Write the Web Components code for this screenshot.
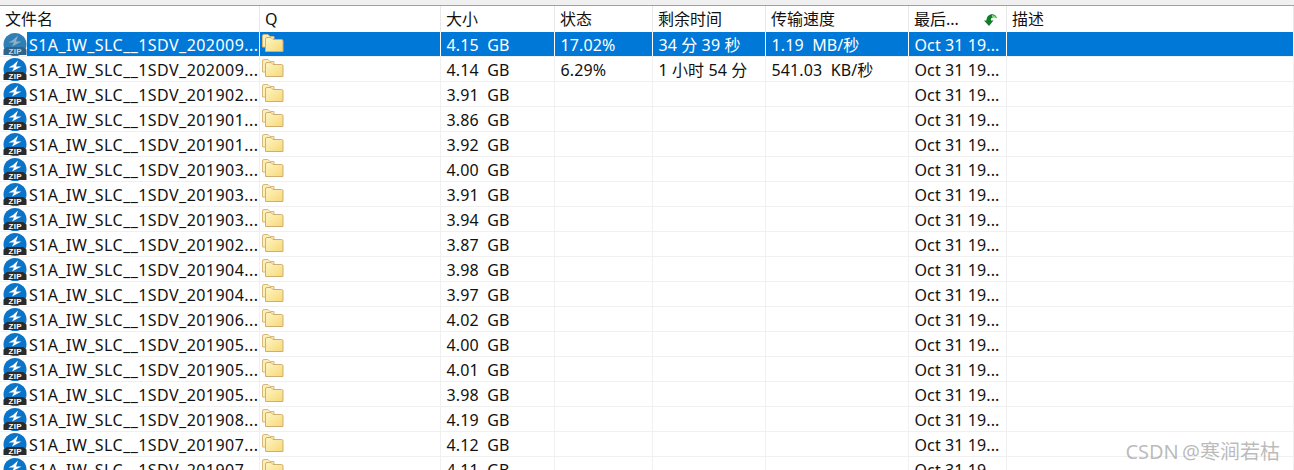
<!DOCTYPE html>
<html>
<head>
<meta charset="utf-8">
<title>传输列表</title>
<style>
  html, body { margin: 0; height: 100%; overflow: hidden; background: #fff; }
  body { font: 16px/25px "Noto Sans", "Noto Sans CJK SC", sans-serif; color: #111; }
</style>
</head>
<body>
<transfer-list></transfer-list>
<script>
const COLS = '260px 181px 114px 98px 113px 143px 98px 1fr';

const FILES = [
  ['202009', '4.15', '17.02%', '34 分 39 秒', '1.19  MB/秒'],
  ['202009', '4.14', '6.29%', '1 小时 54 分', '541.03  KB/秒'],
  ['201902', '3.91'], ['201901', '3.86'], ['201901', '3.92'], ['201903', '4.00'],
  ['201903', '3.91'], ['201903', '3.94'], ['201902', '3.87'], ['201904', '3.98'],
  ['201904', '3.97'], ['201906', '4.02'], ['201905', '4.00'], ['201905', '4.01'],
  ['201905', '3.98'], ['201908', '4.19'], ['201907', '4.12'], ['201907', '4.11']
];

class ZipIcon extends HTMLElement {
  connectedCallback() {
    if (this.shadowRoot) return;
    this.attachShadow({mode: 'open'});
    this.shadowRoot.innerHTML = `
      <style>
        :host { display: block; width: 24px; height: 24px; }
        svg { display: block; }
        .disc { fill: var(--zip-disc, #0a74c8); }
        .bar { fill: var(--zip-bar, #2b2b2b); }
        .bolt { fill: var(--zip-bolt, #fff); }
        text { font: bold 8px "Liberation Sans", sans-serif; fill: var(--zip-text, #fff); }
      </style>
      <svg width="24" height="24" viewBox="0 0 24 24">
        <circle class="disc" cx="12" cy="12.5" r="11.5"/>
        <path class="bar" d="M4 15 H20 L23.5 17.5 V23 H.5 V17.5 Z"/>
        <path class="bolt" d="M15 3.5 L10 8 L5.5 10.5 H11 L9 14.5 L18.5 9.5 H13 Z"/>
        <text x="5.5" y="22" textLength="13">ZIP</text>
      </svg>`;
  }
}

class FolderIcon extends HTMLElement {
  connectedCallback() {
    if (this.shadowRoot) return;
    this.attachShadow({mode: 'open'});
    this.shadowRoot.innerHTML = `
      <style>
        :host { display: block; width: 23px; height: 18px; }
        svg { display: block; }
      </style>
      <svg width="23" height="18" viewBox="0 0 23 18">
        <defs>
          <linearGradient id="leaf" x1="0" y1="0" x2="1" y2="1">
            <stop offset="0" stop-color="#fff6c4"/>
            <stop offset="1" stop-color="#f6d878"/>
          </linearGradient>
        </defs>
        <path d="M1.5 13 V2 Q1.5 .5 3 .5 H7 L9 2.5 H13 V13 Z" fill="#fbeeb8" stroke="#d8b878"/>
        <path d="M4.5 17.5 V5 Q4.5 3.5 6 3.5 H10 L12 5.5 H20.5 Q22 5.5 22 7 V17.5 Z" fill="url(#leaf)" stroke="#d0ae72"/>
      </svg>`;
  }
}

class SortArrow extends HTMLElement {
  connectedCallback() {
    if (this.shadowRoot) return;
    this.attachShadow({mode: 'open'});
    this.shadowRoot.innerHTML = `
      <style>
        :host { display: block; width: 14px; height: 13px; }
        svg { display: block; }
      </style>
      <svg width="14" height="13" viewBox="0 0 14 13">
        <path d="M6 13 L1 7.5 H3.5 C3.5 3 7 .5 10.5 1.5 C12.5 2 13.7 3.5 13.8 5.5 C12.5 4 10 4 8.5 5 C8 5.5 7.8 6.5 8 7.5 H10.5 Z" fill="#0f7d2a"/>
        <path d="M9 2 C11 2 13 3 13.5 5 C12 4 10.5 3.8 9 4.2 Z" fill="#6fdc74"/>
      </svg>`;
  }
}

class HeaderCell extends HTMLElement {
  connectedCallback() {
    if (this.shadowRoot) return;
    this.attachShadow({mode: 'open'});
    this.shadowRoot.innerHTML = `
      <style>
        :host {
          display: flex;
          align-items: center;
          justify-content: space-between;
          padding: 1px 9px 0 5px;
          min-width: 0;
          box-sizing: border-box;
          border-right: 1px solid #e8e8e8;
          white-space: nowrap;
        }
      </style>
      <slot></slot>
      <slot name="end"></slot>`;
  }
}

class FileRow extends HTMLElement {
  connectedCallback() {
    if (!this.shadowRoot) {
      this.attachShadow({mode: 'open'});
      this.render();
    }
  }

  render() {
    const [stamp, size, status = '', left = '', speed = ''] = JSON.parse(this.getAttribute('data'));
    const cell = (text) => `<div class="cell">${text}</div>`;
    this.shadowRoot.innerHTML = `
      <style>
        :host {
          display: grid;
          grid-template-columns: ${COLS};
          height: 25px;
          box-sizing: border-box;
          border-bottom: 1px solid #f0f0f0;
          --line: #f0f0f0;
        }
        :host([selected]) {
          color: #fff;
          --line: #fff;
          --zip-disc: #2f7fb4;
          --zip-bar: #2f6488;
          --zip-bolt: #8fb0c8;
          --zip-text: #c4d8e6;
        }
        .name { display: flex; align-items: center; min-width: 0; border-right: 1px solid var(--line); }
        zip-icon { flex: none; margin-left: 3px; }
        .label {
          flex: 1;
          min-width: 0;
          height: 24px;
          line-height: 26px;
          padding-left: 2px;
          letter-spacing: .45px;
          white-space: nowrap;
          overflow: hidden;
        }
        :host([selected]) .label, :host([selected]) .cell, :host([selected]) .folder { background: #0078d7; }
        .folder {
          display: flex;
          align-items: flex-start;
          padding-left: 1px;
          border-right: 1px solid var(--line);
        }
        folder-icon { margin-top: 2px; }
        .cell {
          padding-left: 5.5px;
          height: 24px;
          line-height: 26px;
          letter-spacing: .1px;
          border-right: 1px solid var(--line);
          white-space: pre;
          overflow: hidden;
          box-sizing: border-box;
        }
      </style>
      <div class="name"><zip-icon></zip-icon><div class="label">S1A_IW_SLC__1SDV_${stamp}...</div></div>
      <div class="folder"><folder-icon></folder-icon></div>
      ${cell(size + '  GB')}
      ${cell(status)}
      ${cell(left)}
      ${cell(speed)}
      ${cell('Oct 31 19...')}
      ${cell('')}`;
  }
}

class TransferList extends HTMLElement {
  connectedCallback() {
    if (this.shadowRoot) return;
    this.attachShadow({mode: 'open'});
    const rows = FILES.map((file, i) =>
      `<file-row data='${JSON.stringify(file)}' ${i === 0 ? 'selected' : ''}></file-row>`).join('');
    this.shadowRoot.innerHTML = `
      <style>
        :host { display: block; position: relative; height: 470px; overflow: hidden; }
        .strip { height: 5px; background: #f0f0f0; border-bottom: 1px solid #a0a0a0; }
        .head { display: grid; grid-template-columns: ${COLS}; height: 26px; }
        .mark {
          position: absolute;
          right: 14px;
          bottom: 6px;
          font: 20px/24px "Noto Sans", "Noto Sans CJK SC", sans-serif;
          word-spacing: -2px;
          color: rgba(120, 120, 120, .5);
        }
      </style>
      <div class="strip"></div>
      <div class="head">
        <header-cell>文件名</header-cell>
        <header-cell>Q</header-cell>
        <header-cell>大小</header-cell>
        <header-cell>状态</header-cell>
        <header-cell>剩余时间</header-cell>
        <header-cell>传输速度</header-cell>
        <header-cell>最后...<sort-arrow slot="end"></sort-arrow></header-cell>
        <header-cell>描述</header-cell>
      </div>
      ${rows}
      <div class="mark">CSDN @寒涧若枯</div>`;
  }
}

customElements.define('zip-icon', ZipIcon);
customElements.define('folder-icon', FolderIcon);
customElements.define('sort-arrow', SortArrow);
customElements.define('header-cell', HeaderCell);
customElements.define('file-row', FileRow);
customElements.define('transfer-list', TransferList);
</script>
</body>
</html>
